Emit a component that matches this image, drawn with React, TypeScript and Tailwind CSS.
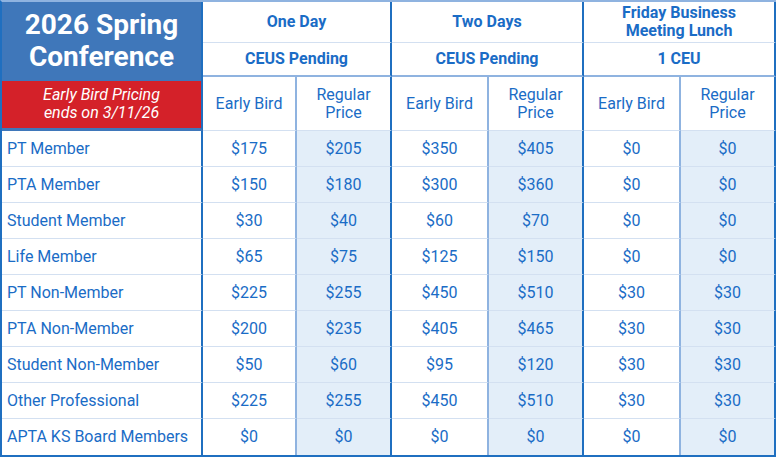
import React from "react";

const rows: [string, string, string, string, string, string, string][] = [
  ["PT Member", "$175", "$205", "$350", "$405", "$0", "$0"],
  ["PTA Member", "$150", "$180", "$300", "$360", "$0", "$0"],
  ["Student Member", "$30", "$40", "$60", "$70", "$0", "$0"],
  ["Life Member", "$65", "$75", "$125", "$150", "$0", "$0"],
  ["PT Non-Member", "$225", "$255", "$450", "$510", "$30", "$30"],
  ["PTA Non-Member", "$200", "$235", "$405", "$465", "$30", "$30"],
  ["Student Non-Member", "$50", "$60", "$95", "$120", "$30", "$30"],
  ["Other Professional", "$225", "$255", "$450", "$510", "$30", "$30"],
  ["APTA KS Board Members", "$0", "$0", "$0", "$0", "$0", "$0"],
];

const major = "border-r-2 border-r-[#1f6fc0]";
const minor = "border-r-2 border-r-[#8fb3e0]";

export default function App() {
  return (
    <div className="w-[778px] h-[463px] bg-white font-['Roboto',sans-serif] text-[#1a6cc6]">
      <div className="w-[776px] border-l-2 border-l-[#1f6fc0] border-t-2 border-t-[#8fb3e0] border-b-2 border-b-[#1f6fc0] grid grid-cols-[201px_94px_95px_97px_95px_97px_95px] grid-rows-[41px_34px_54px]">
        {/* left title block */}
        <div className={`row-span-3 flex flex-col bg-[#3f77ba] border-b-[3px] border-b-[#3f77ba] ${major}`}>
          <div className="h-[79px] flex items-center justify-center text-center text-white font-bold text-[28px] leading-[32px] pb-[2px]">
            2026 Spring
            <br />
            Conference
          </div>
          <div className="flex-1 flex items-center justify-center text-center bg-[#d42129] text-white italic text-[16px] leading-[18px] pb-[1px]">
            Early Bird Pricing
            <br />
            ends on 3/11/26
          </div>
        </div>

        {/* row 1 */}
        <div className={`col-span-2 flex items-center justify-center font-bold text-[16px] border-b border-b-[#d3e0f1] ${major}`}>
          One Day
        </div>
        <div className={`col-span-2 flex items-center justify-center font-bold text-[16px] border-b border-b-[#d3e0f1] ${major}`}>
          Two Days
        </div>
        <div className={`col-span-2 flex items-center justify-center text-center font-bold text-[16px] leading-[18px] border-b border-b-[#d3e0f1] ${major}`}>
          Friday Business
          <br />
          Meeting Lunch
        </div>

        {/* row 2 */}
        <div className={`col-span-2 flex items-center justify-center font-bold text-[16px] border-b-2 border-b-[#8fb3e0] ${major}`}>
          CEUS Pending
        </div>
        <div className={`col-span-2 flex items-center justify-center font-bold text-[16px] border-b-2 border-b-[#8fb3e0] ${major}`}>
          CEUS Pending
        </div>
        <div className={`col-span-2 flex items-center justify-center font-bold text-[16px] border-b-2 border-b-[#8fb3e0] ${major}`}>
          1 CEU
        </div>

        {/* row 3 */}
        {[0, 1, 2].map((g) => (
          <React.Fragment key={g}>
            <div className={`flex items-center justify-center text-[16px] border-b border-b-[#d3e0f1] ${minor}`}>
              Early Bird
            </div>
            <div className={`flex items-center justify-center text-center text-[16px] leading-[18px] border-b border-b-[#d3e0f1] ${major}`}>
              Regular
              <br />
              Price
            </div>
          </React.Fragment>
        ))}

        {/* data rows */}
        {rows.map((r, i) => {
          const last = i === rows.length - 1;
          const rb = last ? "" : "border-b border-b-[#d3e0f1]";
          return (
            <React.Fragment key={r[0]}>
              <div className={`h-[36px] flex items-center pl-[5px] text-[16px] ${rb} ${major}`}>{r[0]}</div>
              {r.slice(1).map((v, j) => (
                <div
                  key={j}
                  className={`h-[36px] flex items-center justify-center text-[16px] ${rb} ${
                    j % 2 === 1 ? `bg-[#e3eef9] ${major}` : minor
                  }`}
                >
                  {v}
                </div>
              ))}
            </React.Fragment>
          );
        })}
      </div>
    </div>
  );
}
